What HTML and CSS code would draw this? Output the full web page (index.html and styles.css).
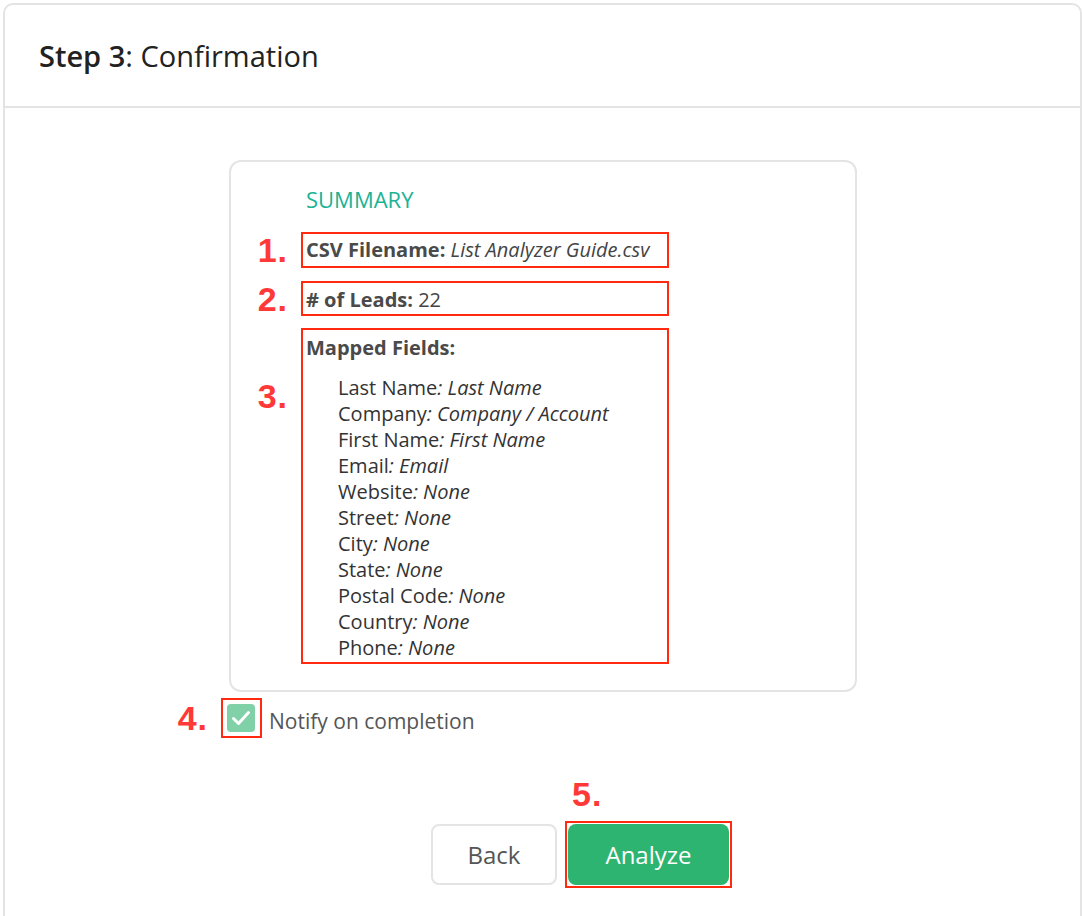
FILE: index.html
```html
<!DOCTYPE html>
<html lang="en">
  <head>
    <meta charset="UTF-8" />
    <meta name="viewport" content="width=device-width, initial-scale=1.0" />
    <title>Step 3: Confirmation</title>
    <link rel="stylesheet" href="styles.css">
  </head>
  <body>
    <div class="panel">
      <div class="panel-heading">
        <h2><span class="step">Step 3</span>: Confirmation</h2>
      </div>

      <div class="panel-body">
        <div class="summary">
          <h3>SUMMARY</h3>

          <div class="row mark row-file">
            <span class="num">1.</span>
            <b>CSV Filename:</b> <i>List Analyzer Guide.csv</i>
          </div>

          <div class="row mark row-leads">
            <span class="num">2.</span>
            <b># of Leads:</b> 22
          </div>

          <div class="row mark row-fields">
            <span class="num num-3">3.</span>
            <b>Mapped Fields:</b>
            <ul class="fields">
              <li>Last Name<i>: Last Name</i></li>
              <li>Company<i>: Company / Account</i></li>
              <li>First Name<i>: First Name</i></li>
              <li>Email<i>: Email</i></li>
              <li>Website<i>: None</i></li>
              <li>Street<i>: None</i></li>
              <li>City<i>: None</i></li>
              <li>State<i>: None</i></li>
              <li>Postal Code<i>: None</i></li>
              <li>Country<i>: None</i></li>
              <li>Phone<i>: None</i></li>
            </ul>
          </div>
        </div>

        <label class="notify">
          <span class="mark check-wrap">
            <span class="num">4.</span>
            <span class="checkbox">
              <svg width="20" height="16" viewBox="0 0 20 16">
                <path d="M2.5 8.5 L7.5 13.5 L17.5 2.5" fill="none" stroke="#fff" stroke-width="3" stroke-linecap="round" stroke-linejoin="round"/>
              </svg>
            </span>
          </span>
          <span class="notify-text">Notify on completion</span>
        </label>

        <div class="actions">
          <button class="btn btn-back">Back</button>
          <span class="mark btn-wrap">
            <span class="num num-5">5.</span>
            <button class="btn btn-go">Analyze</button>
          </span>
        </div>
      </div>
    </div>
  </body>
</html>
```

FILE: styles.css
```css
body {
  margin: 0;
  padding: 0;
  background: #fff;
  font-family: "Open Sans", "Noto Sans", sans-serif;
  color: #333;
}

.panel {
  margin: 3px 0 0 3px;
  width: 1079px;
  height: 940px;
  box-sizing: border-box;
  border: 2px solid #e4e4e4;
  border-radius: 10px 10px 0 0;
}

.panel-heading {
  padding: 31px 34px 30px;
  border-bottom: 2px solid #e4e4e4;
}

.panel-heading h2 {
  margin: 0;
  font-size: 29px;
  line-height: 40px;
  font-weight: 400;
  color: #222;
}

.step {
  font-weight: 600;
}

.panel-body {
  padding: 52px 0 0 224px;
}

.summary {
  width: 628px;
  box-sizing: border-box;
  border: 2px solid #e4e4e4;
  border-radius: 12px;
  padding: 22px 0 26px 70px;
}

.summary h3 {
  margin: 0 0 17px;
  padding-left: 5px;
  font-size: 22px;
  line-height: 31px;
  font-weight: 400;
  color: #1ab394;
}

/* red annotation outlines */
.mark {
  position: relative;
  border: 2px solid #ff2a10;
}

.num {
  position: absolute;
  right: calc(100% + 15px);
  top: 50%;
  transform: translateY(-50%);
  font-family: "Liberation Sans", Arial, sans-serif;
  font-weight: 700;
  font-size: 34px;
  line-height: 36px;
  letter-spacing: 1px;
  color: #ff3838;
}

.row {
  width: 368px;
  box-sizing: border-box;
  font-size: 20px;
  line-height: 26px;
  color: #444;
}

.row b {
  font-weight: 700;
  color: #4a4a4a;
}

.row-file {
  padding: 3px 3px 3px;
  margin-bottom: 13px;
}

.row-leads {
  padding: 4px 3px 1px;
  margin-bottom: 12px;
}

.row-fields {
  padding: 5px 3px 1px;
}

.num-3 {
  top: 48px;
  transform: none;
}

.fields {
  list-style: none;
  margin: 14px 0 0;
  padding: 0 0 0 32px;
  color: #333;
}

.fields i {
  color: #333;
}

.notify {
  display: flex;
  align-items: center;
  gap: 7px;
  margin: 6px 0 0 -8px;
  font-size: 21px;
  color: #555;
}

.notify-text {
  padding-top: 5px;
}

.check-wrap {
  display: flex;
  padding: 4px 5px 4px 4px;
}

.check-wrap .num {
  right: calc(100% + 15px);
}

.checkbox {
  display: flex;
  align-items: center;
  justify-content: center;
  width: 28px;
  height: 28px;
  border-radius: 4px;
  background: #80d0a8;
}

.actions {
  display: flex;
  align-items: center;
  gap: 8px;
  margin: 83px 0 0 202px;
}

.btn {
  font-family: "Open Sans", "Noto Sans", sans-serif;
  font-size: 24px;
  height: 61px;
  border-radius: 8px;
  cursor: pointer;
}

.btn-back {
  width: 126px;
  background: #fff;
  border: 2px solid #e4e4e4;
  color: #555;
}

.btn-wrap {
  display: flex;
  padding: 1px;
}

.btn-go {
  width: 161px;
  border: none;
  background: #2db470;
  color: #fff;
}

.num-5 {
  right: auto;
  left: 5px;
  top: -47px;
  transform: none;
}
```
